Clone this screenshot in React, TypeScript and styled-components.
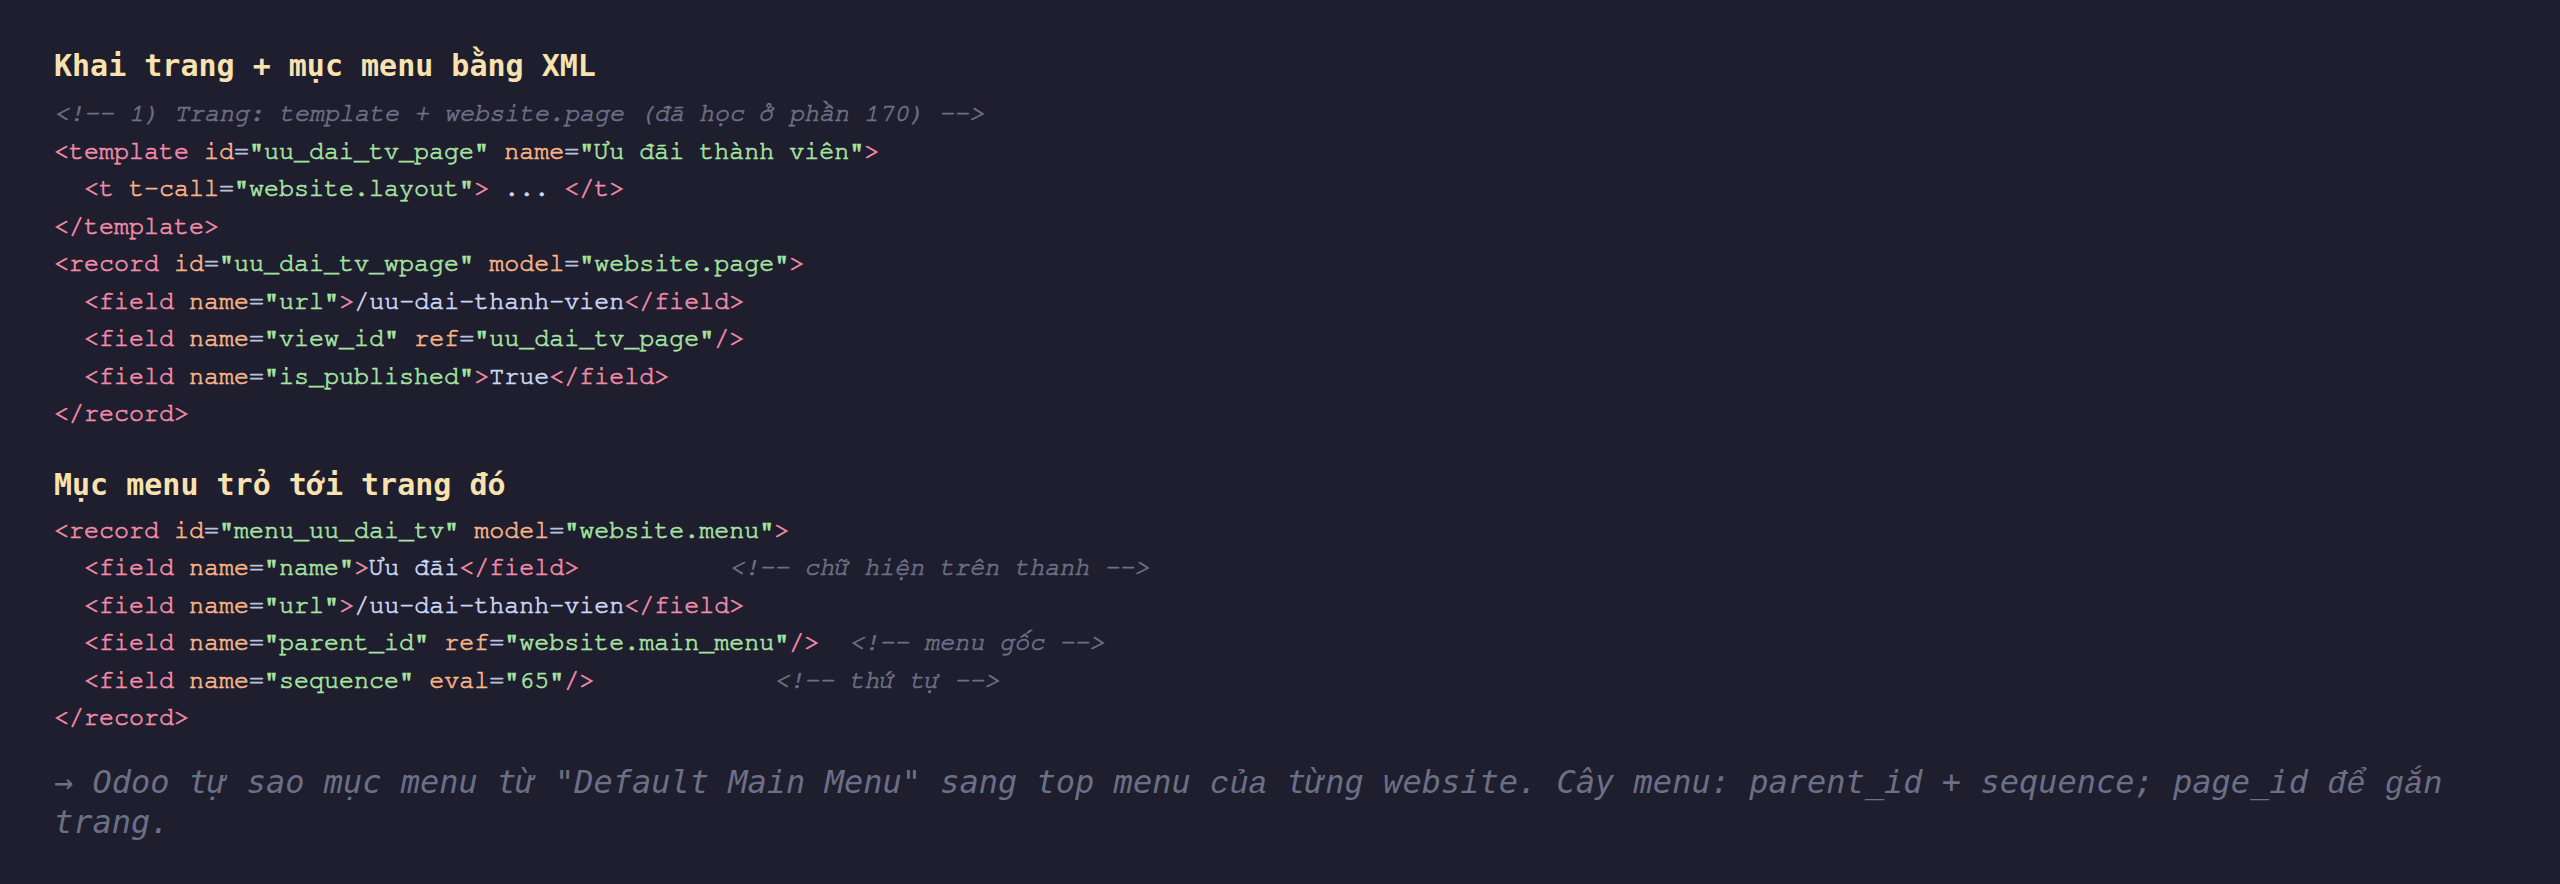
import React from "react";
import styled, { createGlobalStyle } from "styled-components";

const Global = createGlobalStyle`
  html, body {
    margin: 0;
    padding: 0;
    background: #1e1e2e;
  }
  body {
    min-height: 884px;
  }
`;

const Page = styled.main`
  display: flex;
  flex-direction: column;
  padding: 48px 55px 40px 54px;
  background: #1e1e2e;
  min-height: 884px;
  box-sizing: border-box;
`;

const Section = styled.section`
  display: flex;
  flex-direction: column;
  margin-bottom: 30px;
`;

const Heading = styled.h3<{ $gap: number; $shift?: number }>`
  margin: ${(p) => p.$shift ?? 0}px 0 ${(p) => p.$gap}px 0;
  font-family: "DejaVu Sans Mono", monospace;
  font-weight: bold;
  font-size: 30px;
  line-height: normal;
  color: #f9e2af;
`;

const Code = styled.div`
  font-family: "Nimbus Mono PS", "Nimbus Mono L", "FreeMono", "Courier New", Courier, "Liberation Mono", monospace;
  font-size: 25px;
  line-height: 1.5;
  color: #cdd6f4;
  white-space: pre;
  -webkit-text-stroke: 0.7px currentColor;
`;

const Line = styled.div`
  height: 37.5px;
`;

const Tag = styled.span`
  color: #f38ba8;
`;
const Attr = styled.span`
  color: #fab387;
`;
const Str = styled.span`
  color: #a6e3a1;
`;
const Eq = styled.span`
  color: #bac2de;
`;
const Txt = styled.span`
  color: #cdd6f4;
`;
const Comment = styled.span`
  color: #6c7086;
  font-style: italic;
`;

const Note = styled.p`
  margin: -4px 0 0 0;
  font-family: "DejaVu Sans Mono", monospace;
  font-style: italic;
  font-size: 32px;
  line-height: normal;
  color: #6c7086;
`;

const Viet = styled.span`
  font-family: "Liberation Mono", "DejaVu Sans Mono", monospace;
  font-style: italic;
`;

const A = ({ n, v }: { n: string; v: string }) => (
  <>
    {" "}
    <Attr>{n}</Attr>
    <Eq>=</Eq>
    <Str>"{v}"</Str>
  </>
);

export default function App() {
  return (
    <>
      <Global />
      <Page>
        <Section>
          <Heading $gap={12}>Khai trang + mục menu bằng XML</Heading>
          <Code>
            <Line>
              <Comment>{"<!-- 1) Trang: template + website.page (đã học ở phần 170) -->"}</Comment>
            </Line>
            <Line>
              <Tag>{"<template"}</Tag>
              <A n="id" v="uu_dai_tv_page" />
              <A n="name" v="Ưu đãi thành viên" />
              <Tag>{">"}</Tag>
            </Line>
            <Line>
              {"  "}
              <Tag>{"<t"}</Tag>
              <A n="t-call" v="website.layout" />
              <Tag>{">"}</Tag>
              <Txt>{" ... "}</Txt>
              <Tag>{"</t>"}</Tag>
            </Line>
            <Line>
              <Tag>{"</template>"}</Tag>
            </Line>
            <Line>
              <Tag>{"<record"}</Tag>
              <A n="id" v="uu_dai_tv_wpage" />
              <A n="model" v="website.page" />
              <Tag>{">"}</Tag>
            </Line>
            <Line>
              {"  "}
              <Tag>{"<field"}</Tag>
              <A n="name" v="url" />
              <Tag>{">"}</Tag>
              <Txt>/uu-dai-thanh-vien</Txt>
              <Tag>{"</field>"}</Tag>
            </Line>
            <Line>
              {"  "}
              <Tag>{"<field"}</Tag>
              <A n="name" v="view_id" />
              <A n="ref" v="uu_dai_tv_page" />
              <Tag>{"/>"}</Tag>
            </Line>
            <Line>
              {"  "}
              <Tag>{"<field"}</Tag>
              <A n="name" v="is_published" />
              <Tag>{">"}</Tag>
              <Txt>True</Txt>
              <Tag>{"</field>"}</Tag>
            </Line>
            <Line>
              <Tag>{"</record>"}</Tag>
            </Line>
          </Code>
        </Section>
        <Section>
          <Heading $gap={10} $shift={4}>Mục menu trỏ tới trang đó</Heading>
          <Code>
            <Line>
              <Tag>{"<record"}</Tag>
              <A n="id" v="menu_uu_dai_tv" />
              <A n="model" v="website.menu" />
              <Tag>{">"}</Tag>
            </Line>
            <Line>
              {"  "}
              <Tag>{"<field"}</Tag>
              <A n="name" v="name" />
              <Tag>{">"}</Tag>
              <Txt>Ưu đãi</Txt>
              <Tag>{"</field>"}</Tag>
              {"          "}
              <Comment>{"<!-- chữ hiện trên thanh -->"}</Comment>
            </Line>
            <Line>
              {"  "}
              <Tag>{"<field"}</Tag>
              <A n="name" v="url" />
              <Tag>{">"}</Tag>
              <Txt>/uu-dai-thanh-vien</Txt>
              <Tag>{"</field>"}</Tag>
            </Line>
            <Line>
              {"  "}
              <Tag>{"<field"}</Tag>
              <A n="name" v="parent_id" />
              <A n="ref" v="website.main_menu" />
              <Tag>{"/>"}</Tag>
              {"  "}
              <Comment>{"<!-- menu gốc -->"}</Comment>
            </Line>
            <Line>
              {"  "}
              <Tag>{"<field"}</Tag>
              <A n="name" v="sequence" />
              <A n="eval" v="65" />
              <Tag>{"/>"}</Tag>
              {"            "}
              <Comment>{"<!-- thứ tự -->"}</Comment>
            </Line>
            <Line>
              <Tag>{"</record>"}</Tag>
            </Line>
          </Code>
        </Section>
        <Note>
          → Odoo tự sao mục menu từ "Default Main Menu" sang top menu <Viet>của</Viet> từng website. Cây menu:
          parent_id + sequence; page_id <Viet>để</Viet> <Viet>gắn</Viet> trang.
        </Note>
      </Page>
    </>
  );
}
